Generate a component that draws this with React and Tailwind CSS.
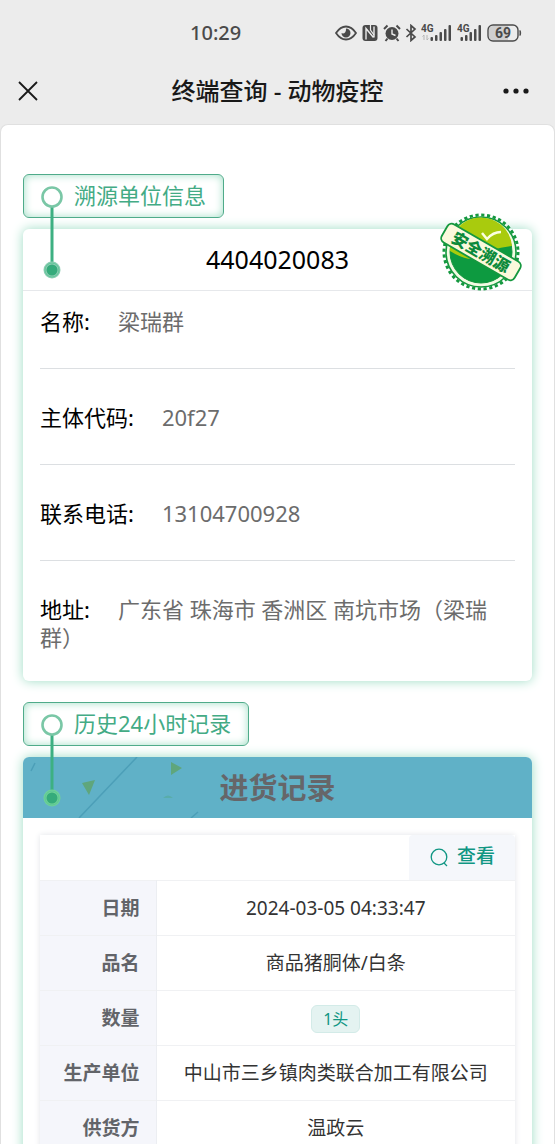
const unitInfo = [
  { label: '名称', value: '梁瑞群' },
  { label: '主体代码', value: '20f27' },
  { label: '联系电话', value: '13104700928' },
  { label: '地址', value: '广东省 珠海市 香洲区 南坑市场（梁瑞群）' },
];

const record = [
  { label: '日期', value: '2024-03-05 04:33:47' },
  { label: '品名', value: '商品猪胴体/白条' },
  { label: '数量', value: '1头', tag: true },
  { label: '生产单位', value: '中山市三乡镇肉类联合加工有限公司' },
  { label: '供货方', value: '温政云' },
];

function Signal({ arrows }) {
  return (
    <svg width={arrows ? 32 : 26} height="20" viewBox={arrows ? '0 0 32 20' : '6 0 26 20'} fill="#4a4a4a" aria-hidden="true">
      <text x={arrows ? 0 : 6} y="9" fontSize="10" fontWeight="700" fontFamily="Roboto, sans-serif">4G</text>
      {arrows && <path d="M3 12v5M1.500 13.500L3 12M6 12v5M7.500 15.500L6 17" stroke="#b5b5b5" fill="none" />}
      <rect x="9.500" y="14" width="2.500" height="4" rx="1" />
      <rect x="14" y="12" width="2.500" height="6" rx="1" />
      <rect x="18.500" y="9" width="2.500" height="9" rx="1" />
      <rect x="23" y="6" width="2.500" height="12" rx="1" />
      <rect x="27.500" y="2" width="2.500" height="16" rx="1" />
    </svg>
  );
}

function StatusBar() {
  return (
    <div className="flex h-16 shrink-0 items-center justify-between pr-8 pl-[190px] pt-0.5 text-[#4a4a4a]">
      <span className="text-xl font-medium">10:29</span>
      <div className="flex items-center gap-1">
        {/* Eye comfort */}
        <svg width="22" height="16" viewBox="0 0 22 16" fill="none" aria-hidden="true">
          <path d="M1 8C4 3.500 7.500 1.500 11 1.500S18 3.500 21 8c-3 4.500-6.500 6.500-10 6.500S4 12.500 1 8z" stroke="#4a4a4a" strokeWidth="1.800" />
          <path d="M11 3.500a4.500 4.500 0 1 1-4.500 4.500c2 1.500 5-.5 4.500-4.500z" fill="#4a4a4a" />
        </svg>
        {/* NFC */}
        <svg width="18" height="18" viewBox="0 0 18 18" fill="none" aria-hidden="true">
          <rect x="1.500" y="1" width="15" height="16" rx="3" fill="#4a4a4a" />
          <path d="M5 15.500V4.500l7.500 9M13 2.500v11M5 4.500" stroke="#ececec" strokeWidth="1.400" />
          <path d="M9.500 1v5l3.500 5" stroke="#ececec" strokeWidth="1.200" />
        </svg>
        {/* Alarm */}
        <svg width="18" height="18" viewBox="0 0 18 18" aria-hidden="true">
          <circle cx="9" cy="9.500" r="6.500" fill="#4a4a4a" />
          <path d="M1 5l3.500-3.500M17 5l-3.500-3.500M4.500 14.500L2.500 17M13.500 14.500l2 2.500" stroke="#4a4a4a" strokeWidth="2" />
          <path d="M9 5.500v4.500l3.500 1.500" stroke="#ececec" strokeWidth="1.400" fill="none" />
        </svg>
        {/* Bluetooth */}
        <svg width="12" height="18" viewBox="0 0 12 18" fill="none" aria-hidden="true">
          <path d="M1.500 5l8.500 8-4 3.500V1.500l4 3.500-8.500 8" stroke="#4a4a4a" strokeWidth="1.700" />
        </svg>
        <Signal arrows />
        <Signal />
        {/* Battery */}
        <svg width="36" height="20" viewBox="0 0 36 20" aria-hidden="true">
          <rect x="1" y="2" width="30" height="16" rx="5" fill="#ececec" stroke="#4a4a4a" strokeWidth="1.400" />
          <path d="M6 3h15v14H6q-4 0-4-4V7q0-4 4-4z" fill="#cfcfcf" />
          <path d="M33 7.500q1.500 2.500 0 5z" fill="#4a4a4a" stroke="#4a4a4a" />
          <text x="16" y="15" textAnchor="middle" fontSize="14" fontWeight="700" fontFamily="Roboto, sans-serif" fill="#4a4a4a">69</text>
        </svg>
      </div>
    </div>
  );
}

function SectionTag({ title, dotHalo }) {
  return (
    <div className="relative z-10 flex">
      <h2 className="flex h-11 items-center rounded-md border border-[#4fab8a] bg-white pr-[17px] pb-0.5 pl-[50px] text-[22px] leading-7 text-[#43ab85] shadow-[inset_0_0_8px_#9fdec5]">
        {title}
      </h2>
      <svg className="absolute top-3 left-4" width="26" height="96" viewBox="0 0 26 96" fill="none" aria-hidden="true">
        <path d="M13 21v60" stroke="#3db082" strokeWidth="3" />
        <circle cx="13" cy="11" r="9.500" fill="#fff" stroke="#7ac7a6" strokeWidth="2.600" />
        <circle cx="13" cy="84" r="8.500" fill={dotHalo} />
        <circle cx="13" cy="84" r="7" stroke="#5cc697" />
        <circle cx="13" cy="84" r="5.500" fill="#35ab7b" />
      </svg>
    </div>
  );
}

function Stamp() {
  return (
    <svg className="absolute -top-5 right-2" width="86" height="86" viewBox="-43 -43 86 86" role="img" aria-label="安全溯源">
      <circle r="36.500" fill="#fff" />
      <circle r="37" fill="none" stroke="#15983f" strokeWidth="3" strokeDasharray="3.200 2.610" />
      <circle r="35" fill="#f3fbe3" stroke="#15983f" strokeWidth="1.600" />
      <circle r="31" fill="#0d9a40" stroke="#15983f" />
      <path d="M-31-1A31 31 0 0 1 31-6Q10-4 0 4T-31-1z" fill="#a9cb0d" />
      <path d="M1-19l5 6Q12-20 20-20" stroke="#fbffe0" strokeWidth="2.500" fill="none" />
      <g transform="rotate(30)">
        <rect x="-42" y="-10.500" width="84" height="21" rx="5" fill="#fbf9dc" stroke="#15983f" strokeWidth="1.800" />
        <text y="6" textAnchor="middle" fontSize="16" fontWeight="900" fill="#0d8a3b">安全溯源</text>
      </g>
    </svg>
  );
}

function Confetti() {
  return (
    <svg className="absolute top-0 left-0" width="260" height="61" viewBox="0 0 260 61" fill="none" aria-hidden="true">
      <path d="M56 61L114 0M168 61l7-6M8 14l4-8" stroke="#4c9fb8" strokeWidth="1.500" />
      <path d="M59 26l13-3-6 15zM148 5l11 6-11 7z" fill="#5fa67c" />
      <path d="M140 41q5-5 10 0z" fill="#59adaa" />
    </svg>
  );
}

export default function App() {
  return (
    <div className="flex h-screen flex-col overflow-hidden bg-[#ececec] font-['Noto_Sans','Noto_Sans_CJK_SC',sans-serif]" lang="zh-CN">
      <StatusBar />

      <header className="flex h-[60px] shrink-0 items-center justify-between px-4 pb-1.5 text-[#191919]">
        <button aria-label="关闭" className="w-12">
          <svg width="24" height="24" viewBox="0 0 24 24" fill="none" stroke="currentColor" strokeWidth="1.800">
            <path d="M3 3l18 18M21 3L3 21" />
          </svg>
        </button>
        <h1 className="text-2xl font-medium">终端查询 - 动物疫控</h1>
        <button aria-label="更多" className="w-12">
          <svg width="48" height="24" viewBox="0 0 48 24" fill="currentColor">
            <circle cx="15" cy="12" r="2.600" />
            <circle cx="25" cy="12" r="2.600" />
            <circle cx="35" cy="12" r="2.600" />
          </svg>
        </button>
      </header>

      <main className="min-h-0 flex-1 overflow-hidden rounded-t-lg border border-b-0 border-[#e0e0e0] bg-white px-[22px] pt-[49px]">
        <SectionTag title="溯源单位信息" dotHalo="#8fcdb4" />
        <section className="relative mt-[11px] rounded-md bg-white shadow-[0_0_12px_#9cdcc4]">
          <div className="flex h-[62px] items-center justify-center border-b border-[#e6e8eb] text-[25px] text-black">
            4404020083
          </div>
          <Stamp />
          <dl className="px-[17px] pb-[30px] text-[22px] leading-7">
            {unitInfo.map((item, i) => (
              <div
                key={item.label}
                className={`${i === 0 ? 'pt-4' : 'pt-[34px]'} ${i === unitInfo.length - 1 ? '' : 'border-b border-[#dcdfe2] pb-[33px]'}`}
              >
                <dt className="mr-7 inline text-black">{item.label}:</dt>
                <dd className="inline text-[#6c6c6c]">{item.value}</dd>
              </div>
            ))}
          </dl>
        </section>

        <div className="mt-[21px]">
          <SectionTag title="历史24小时记录" dotHalo="#6fd396" />
        </div>
        <section className="mt-[11px] rounded-md bg-white pb-4 shadow-[0_0_12px_#9cdcc4]">
          <div className="relative flex h-[61px] items-center justify-center rounded-t-md bg-[#60b1c7]">
            <Confetti />
            <h3 className="relative text-[29px] leading-10 font-bold text-[#666669]">进货记录</h3>
          </div>

          <div className="mx-[17px] mt-[17px] shadow-[0_0_6px_#e2e4e8]">
            <div className="flex justify-end">
              <button className="flex h-[45px] items-center gap-2 rounded-t bg-[#f5f7fb] px-5 pb-0.5 text-[19px] font-medium text-[#109683]">
                <svg width="20" height="20" viewBox="0 0 20 20" fill="none" stroke="currentColor" strokeWidth="1.300" aria-hidden="true">
                  <circle cx="10" cy="10" r="7.800" />
                  <path d="M15 16l3 3" />
                </svg>
                查看
              </button>
            </div>
            <table className="w-full border-collapse text-[19px] leading-7">
              <tbody>
                {record.map((row) => (
                  <tr key={row.label} className="h-[55px] border-t border-[#f0f1f3]">
                    <th scope="row" className="w-[116px] border-r border-[#eceef2] bg-[#f5f6fb] pr-4 text-right font-bold text-[#626469]">
                      {row.label}
                    </th>
                    <td className="text-center text-[#333]">
                      {row.tag ? (
                        <span className="inline-block rounded-md border border-[#d3ebe8] bg-[#e4f3f1] px-[11px] text-base leading-[26px] text-[#109683]">
                          {row.value}
                        </span>
                      ) : (
                        row.value
                      )}
                    </td>
                  </tr>
                ))}
              </tbody>
            </table>
          </div>
        </section>
      </main>
    </div>
  );
}
